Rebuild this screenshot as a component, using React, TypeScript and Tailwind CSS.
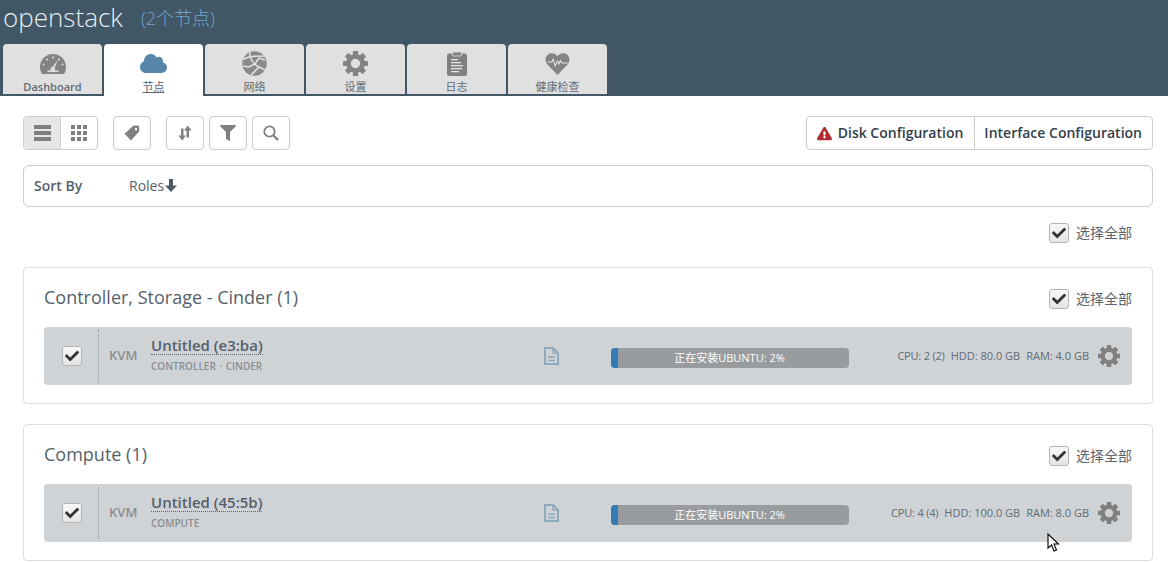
import type { ReactNode } from "react";
import { FaCloud, FaFilter, FaExclamationTriangle, FaCheck } from "react-icons/fa";

function GearIcon({ size, color }: { size: number; color: string }) {
  const teeth = [0, 45, 90, 135, 180, 225, 270, 315];
  return (
    <svg width={size} height={size} viewBox="0 0 24 24" fill={color}>
      {teeth.map((a) => (
        <rect key={a} x="9.500" y="0" width="5" height="5" rx="0.600" transform={`rotate(${a} 12 12)`} />
      ))}
      <circle cx="12" cy="12" r="6.800" fill="none" stroke={color} strokeWidth="4.600" />
    </svg>
  );
}

function GaugeIcon() {
  return (
    <svg width="26" height="20" viewBox="0 0 26 20" fill="#838383">
      <path d="M13 0C5.800 0 0 5.800 0 13c0 2.200.5 4.300 1.500 6.200.2.500.6.800 1.100.8h20.800c.5 0 .9-.3 1.100-.8 1-1.900 1.500-4 1.500-6.200C26 5.800 20.200 0 13 0z" />
      <g fill="#dfe0df">
        <circle cx="13" cy="3.500" r="1" />
        <circle cx="7" cy="5.500" r="1" />
        <circle cx="3.500" cy="10.500" r="1" />
        <circle cx="19" cy="5.500" r="1" />
        <circle cx="22.500" cy="10.500" r="1" />
        <path d="M18 5.500 14.600 13.800a2.400 2.400 0 1 1-2-.8z" />
        <rect x="7.500" y="16.500" width="11" height="1.600" />
      </g>
    </svg>
  );
}

function GlobeIcon() {
  return (
    <svg width="25" height="25" viewBox="0 0 25 25">
      <circle cx="12.500" cy="12.500" r="12.200" fill="#8a8a8a" />
      <g stroke="#dfe0df" strokeWidth="1.600" fill="none">
        <path d="M1 8.500C7 5 12 5 24 5" />
        <path d="M7.500 1.500C8 8 11 13 17 16s6 3 7 3" />
        <path d="M17 7 13 13l-6 3-6-1" />
        <path d="M17 16 9 24" />
        <path d="M17 7l6 2" />
      </g>
    </svg>
  );
}

function ClipboardIcon() {
  return (
    <svg width="20" height="24" viewBox="0 0 20 24">
      <rect x="0" y="1.500" width="20" height="22.500" rx="2" fill="#808080" />
      <rect x="5.500" y="0" width="9" height="4" rx="1" fill="#808080" stroke="#dfe0df" strokeWidth="0.800" />
      <g fill="#e4e5e4">
        <rect x="4" y="7" width="7" height="1.300" />
        <rect x="4" y="10" width="10" height="1.300" />
        <rect x="4" y="13" width="12" height="1.300" />
        <rect x="4" y="16" width="11" height="1.300" />
        <rect x="4" y="19" width="8" height="1.300" />
      </g>
    </svg>
  );
}

function HeartIcon() {
  return (
    <svg width="25" height="22" viewBox="0 0 25 23">
      <path d="M12.500 23 2 12C-.8 8.800-.5 4 2.300 1.800 5.300-.8 10 0 12.500 3.500 15 0 19.700-.8 22.700 1.800c2.800 2.200 3.100 7 .3 10.200z" fill="#838383" />
      <path d="M2 9.500h4.500l1.500-3 2 7 2.500-5 1.500 3 1.500-3.500 1.500 2.500H23" stroke="#e4e5e4" strokeWidth="1.100" fill="none" />
    </svg>
  );
}

function DocIcon() {
  return (
    <svg width="15" height="18" viewBox="0 0 15 18" fill="none" stroke="#8fa9bd" strokeWidth="2">
      <path d="M1 1h8l5 5v11H1z" />
      <path d="M9 1v5h5" strokeWidth="1.500" />
      <path d="M4 10h7M4 13.500h7" strokeWidth="1.400" />
    </svg>
  );
}

function SortIcon() {
  return (
    <svg width="14" height="16" viewBox="0 0 14 15" fill="#808080">
      <path d="M3 3h2.500v7H8l-3.750 5L.5 10H3z" />
      <path d="M8.500 12V5H6l3.750-5L13.500 5H11v7z" />
    </svg>
  );
}

function ListIcon() {
  return (
    <svg width="17" height="16" viewBox="0 0 17 16" fill="#808080">
      <rect width="17" height="4" />
      <rect y="6" width="17" height="4" />
      <rect y="12" width="17" height="4" />
    </svg>
  );
}

function GridIcon() {
  const cells = [0, 6, 12];
  return (
    <svg width="16" height="16" viewBox="0 0 16 16" fill="#808080">
      {cells.map((y) => cells.map((x) => <rect key={`${x}-${y}`} x={x} y={y} width="4" height="4" />))}
    </svg>
  );
}

function TagIcon() {
  return (
    <svg width="16" height="16" viewBox="0 0 16 16" fill="#808080">
      <path fillRule="evenodd" d="M9.500.5 15 .8l.3 5.500L7 15.500.6 8.800zM12 3a1.200 1.200 0 1 0 0 2.400A1.200 1.200 0 0 0 12 3z" />
    </svg>
  );
}

function SearchIcon() {
  return (
    <svg width="16" height="16" viewBox="0 0 16 16" fill="none" stroke="#808080">
      <circle cx="6.500" cy="6.500" r="5.200" strokeWidth="1.800" />
      <path d="M10.500 10.500 15 15" strokeWidth="2.400" />
    </svg>
  );
}

function ArrowDownIcon() {
  return (
    <svg width="12" height="13" viewBox="0 0 12 13" fill="#4e5a64">
      <path d="M4 0h4v6.500h4L6 13 0 6.500h4z" />
    </svg>
  );
}

function Tab({ icon, label, active, latin }: { icon: ReactNode; label: string; active?: boolean; latin?: boolean }) {
  return (
    <div
      className={`flex w-[99px] flex-col items-center rounded-t-[4px] pt-[7px] ${
        active ? "h-[52px] bg-white" : "h-[50px] bg-[#dfe0df]"
      }`}
    >
      <div className="flex h-[25px] items-center justify-center">{icon}</div>
      <span
        className={`mt-[3px] text-[11px] leading-[15px] ${latin ? "font-semibold" : "font-normal"} ${
          active ? "text-[#55646f] underline" : "text-[#5f6b75]"
        }`}
      >
        {label}
      </span>
    </div>
  );
}

function IconButton({ children }: { children: ReactNode }) {
  return (
    <div className="flex h-[34px] w-[38px] items-center justify-center rounded-[4px] border border-[#cccccc] bg-white">
      {children}
    </div>
  );
}

function Checkbox() {
  return (
    <div className="flex h-[20px] w-[20px] items-center justify-center rounded-[3px] border border-[#b4b4b4] bg-gradient-to-b from-[#f8f8f8] to-[#e4e4e4]">
      <FaCheck className="text-[14px] text-[#333333]" />
    </div>
  );
}

function SelectAll() {
  return (
    <div className="flex items-center gap-[7px]">
      <Checkbox />
      <span className="text-[14px] leading-[20px] text-[#5a6570]">选择全部</span>
    </div>
  );
}

function NodeRow({ name, roles, cpu, hdd, ram }: { name: string; roles: string; cpu: string; hdd: string; ram: string }) {
  return (
    <div className="flex h-[58px] items-center rounded-[4px] bg-[#d0d3d6]">
      <div className="flex h-[52px] w-[55px] items-center justify-center border-r border-dotted border-[#8f9499] pl-[2px]">
        <Checkbox />
      </div>
      <span className="ml-[10px] w-[42px] text-[13px] font-semibold text-[#8a8e93]">KVM</span>
      <div className="w-[393px] pb-[3px]">
        <div className="w-fit border-b border-dotted border-[#5a6570] text-[15px] leading-[18px] font-semibold text-[#55606b]">
          {name}
        </div>
        <div className="mt-[4px] text-[10px] leading-[14px] font-semibold text-[#8a8e93] [word-spacing:1px]">{roles}</div>
      </div>
      <DocIcon />
      <div className="mt-[4px] ml-[52px] flex h-[20px] w-[238px] overflow-hidden rounded-[4px] bg-[#999c9f]">
        <div className="h-full w-[7px] bg-[#337ab7]" />
        <div className="flex-1 pr-[8px] text-center text-[11px] leading-[20px] text-white">
          正在安装UBUNTU: 2%
        </div>
      </div>
      <div className="ml-auto flex items-center gap-[9px] pr-[12px]">
        <div className="flex gap-[6px] text-[11px] text-[#5f6b75]">
          <span className="tracking-[-0.2px]">{cpu}</span>
          <span>{hdd}</span>
          <span>{ram}</span>
        </div>
        <GearIcon size={22} color="#808080" />
      </div>
    </div>
  );
}

function RoleCard({ title, children }: { title: string; children: ReactNode }) {
  return (
    <section className="rounded-[4px] border border-[#dddddd] bg-white px-[20px] pt-[19px] pb-[18px]">
      <div className="mb-[20px] flex h-[20px] items-start justify-between">
        <h3 className="text-[18px] leading-[20px] text-[#555f69]">{title}</h3>
        <div className="mt-[2px]">
          <SelectAll />
        </div>
      </div>
      {children}
    </section>
  );
}

export default function App() {
  return (
    <div className="h-[562px] w-[1168px] overflow-hidden bg-white font-['Open_Sans','Noto_Sans_CJK_SC',sans-serif]">
      <header className="h-[96px] bg-[#415766]">
        <div className="flex h-[44px] items-start pl-[3px]">
          <span className="text-[26px] leading-[34px] font-light text-[#e8eef3]">openstack</span>
          <span className="mt-[5px] ml-[18px] text-[18px] leading-[26px] font-light text-[#6fa6d2]">(2个节点)</span>
        </div>
        <nav className="flex gap-[2px] pl-[3px]">
          <Tab icon={<GaugeIcon />} label="Dashboard" latin />
          <Tab icon={<FaCloud className="text-[27px] text-[#5787a8]" />} label="节点" active />
          <Tab icon={<GlobeIcon />} label="网络" />
          <Tab icon={<GearIcon size={25} color="#838383" />} label="设置" />
          <Tab icon={<ClipboardIcon />} label="日志" />
          <Tab icon={<HeartIcon />} label="健康检查" />
        </nav>
      </header>

      <main className="pt-[20px] pr-[15px] pl-[23px]">
        <div className="flex items-start">
          <div className="flex h-[34px] w-[75px] overflow-hidden rounded-[4px] border border-[#cccccc]">
            <div className="flex flex-1 items-center justify-center border-r border-[#cccccc] bg-[#e6e6e6]">
              <ListIcon />
            </div>
            <div className="flex flex-1 items-center justify-center">
              <GridIcon />
            </div>
          </div>
          <div className="ml-[15px]">
            <IconButton>
              <TagIcon />
            </IconButton>
          </div>
          <div className="ml-[15px] flex gap-[5px]">
            <IconButton>
              <SortIcon />
            </IconButton>
            <IconButton>
              <FaFilter className="text-[16px] text-[#808080]" />
            </IconButton>
            <IconButton>
              <SearchIcon />
            </IconButton>
          </div>
          <div className="ml-auto flex h-[34px] items-stretch rounded-[4px] border border-[#cccccc] text-[14px] font-semibold text-[#333f4a]">
            <div className="flex items-center gap-[6px] border-r border-[#cccccc] pr-[11px] pb-[1px] pl-[10px]">
              <FaExclamationTriangle className="mt-[1px] text-[15px] text-[#b02a30]" />
              Disk Configuration
            </div>
            <div className="flex items-center pr-[10px] pb-[1px] pl-[9px]">Interface Configuration</div>
          </div>
        </div>

        <div className="mt-[15px] flex h-[42px] items-center rounded-[6px] border border-[#cccccc] px-[10px] pb-[1px] text-[14px] text-[#55606b]">
          <span className="w-[95px] font-semibold">Sort By</span>
          <span className="flex items-center gap-[1px]">
            Roles
            <ArrowDownIcon />
          </span>
        </div>

        <div className="mt-[16px] mb-[24px] flex justify-end pr-[21px]">
          <SelectAll />
        </div>

        <div className="flex flex-col gap-[20px]">
          <RoleCard title="Controller, Storage - Cinder (1)">
            <NodeRow name="Untitled (e3:ba)" roles="CONTROLLER · CINDER" cpu="CPU: 2 (2)" hdd="HDD: 80.0 GB" ram="RAM: 4.0 GB" />
          </RoleCard>
          <RoleCard title="Compute (1)">
            <NodeRow name="Untitled (45:5b)" roles="COMPUTE" cpu="CPU: 4 (4)" hdd="HDD: 100.0 GB" ram="RAM: 8.0 GB" />
          </RoleCard>
        </div>
      </main>

      {/* mouse pointer caught in the screenshot */}
      <svg className="absolute top-[533px] left-[1047px]" width="14" height="20" viewBox="0 0 14 20">
        <path d="M1 1v14l3.500-3 2.500 6 2.500-1-2.500-6h4.500z" fill="white" stroke="black" strokeWidth="1.100" />
      </svg>
    </div>
  );
}
